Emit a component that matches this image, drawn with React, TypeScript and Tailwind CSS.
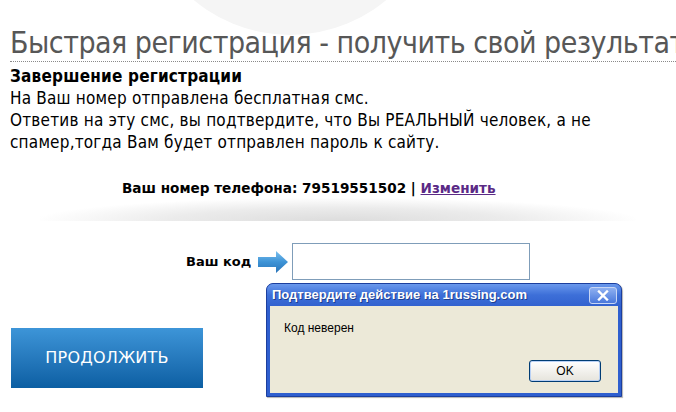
import React from "react";

function Arrow() {
  return (
    <svg width="30" height="22" viewBox="0 0 30 22" className="shrink-0">
      <defs>
        <linearGradient id="arr" x1="0" y1="0" x2="0" y2="1">
          <stop offset="0" stopColor="#7cc0ee" />
          <stop offset="0.5" stopColor="#3d93d6" />
          <stop offset="1" stopColor="#2a74b8" />
        </linearGradient>
      </defs>
      <path d="M0 6 H18 V0 L30 11 L18 22 V16 H0 Z" fill="url(#arr)" />
    </svg>
  );
}

function AlertDialog() {
  return (
    <div className="absolute left-[266px] top-[283px] w-[356px] h-[114px] flex flex-col rounded-t-[7px] bg-[#2f5fcf] border border-[#1c3f9e] shadow-[1px_1px_1px_rgba(0,0,0,0.3)]">
      {/* title bar */}
      <div className="h-[22px] flex items-center justify-between pl-[5px] pr-[4px] rounded-t-[6px] bg-gradient-to-b from-[#6a98ec] via-[#3d6fd8] to-[#3262cf]">
        <span className="text-white text-[13px] font-bold font-['Liberation_Sans',sans-serif] [text-shadow:1px_1px_0_#1d3f8f]">
          Подтвердите действие на 1russing.com
        </span>
        <div className="w-[28px] h-[17px] rounded-[3px] border border-[#c8d6f5] bg-gradient-to-b from-[#8fb0f0] to-[#4a78dc] flex items-center justify-center">
          <svg width="12" height="11" viewBox="0 0 12 11">
            <path d="M2 1.5 L10 9.5 M10 1.5 L2 9.5" stroke="#fff" strokeWidth="2.4" strokeLinecap="square" />
          </svg>
        </div>
      </div>
      {/* body */}
      <div className="flex-1 mx-[3px] mb-[3px] bg-[#ece9d8] flex flex-col pt-[13px] pl-[14px] pr-[17px]">
        <span className="text-[12px] text-black font-['Liberation_Sans',sans-serif]">Код неверен</span>
        <div className="flex justify-end mt-auto mb-[11px]">
          <button className="w-[72px] h-[22px] rounded-[3px] border border-[#003c74] bg-gradient-to-b from-white to-[#e6e4dc] shadow-[inset_0_0_0_1px_#b9d1f5] text-[12px] text-black font-['Liberation_Sans',sans-serif]">
            OK
          </button>
        </div>
      </div>
    </div>
  );
}

export default function App() {
  return (
    <div className="relative w-[676px] h-[412px] overflow-hidden bg-white font-['DejaVu_Sans',sans-serif]">
      {/* decorative background circle */}
      <div className="absolute left-[140px] top-[-265px] w-[300px] h-[300px] rounded-full bg-[#f5f5f5]" />

      <div className="relative pt-[26px] pl-[10px]">
        <h1 className="whitespace-nowrap text-[30px] leading-[34px] text-[#575757] font-['DejaVu_Sans_Condensed','DejaVu_Sans',sans-serif] [font-stretch:condensed] tracking-[-0.5px]">
          Быстрая регистрация - получить свой результат
        </h1>
        <div className="mt-[1px] border-b border-dotted border-[#8a8a8a]" />

        <div className="pt-[3px] text-[17px] leading-[22px] text-black font-['DejaVu_Sans_Condensed','DejaVu_Sans',sans-serif] [font-stretch:condensed] tracking-[0.2px]">
          <p className="font-bold">Завершение регистрации</p>
          <p>На Ваш номер отправлена бесплатная смс.</p>
          <p>Ответив на эту смс, вы подтвердите, что Вы РЕАЛЬНЫЙ человек, а не</p>
          <p>спамер,тогда Вам будет отправлен пароль к сайту.</p>
        </div>
      </div>

      {/* phone row with shadow band */}
      <div className="relative mt-[25px]">
        <p className="pl-[122px] text-[13.6px] leading-[20px] font-bold text-black whitespace-nowrap">
          Ваш номер телефона: 79519551502 | <a href="#" className="text-[#5b2a86] underline">Изменить</a>
        </p>
        <div className="mx-[40px] h-[23px] bg-[radial-gradient(ellipse_at_50%_100%,#dcdcdc_0%,#ebebeb_40%,#ffffff_72%)]" />
      </div>

      {/* code row */}
      <div className="flex items-center mt-[22px] pl-[186px]">
        <span className="text-[13px] font-bold text-black mr-[7px]">Ваш код</span>
        <Arrow />
        <div className="ml-[4px] w-[238px] h-[37px] border border-[#7f9db9] bg-white" />
      </div>

      {/* continue button */}
      <div className="mt-[48px] pl-[11px]">
        <button className="w-[192px] h-[60px] bg-gradient-to-b from-[#3d95d8] to-[#0b5fa3] text-white text-[16px] tracking-[0.2px]">
          ПРОДОЛЖИТЬ
        </button>
      </div>

      <AlertDialog />
    </div>
  );
}
